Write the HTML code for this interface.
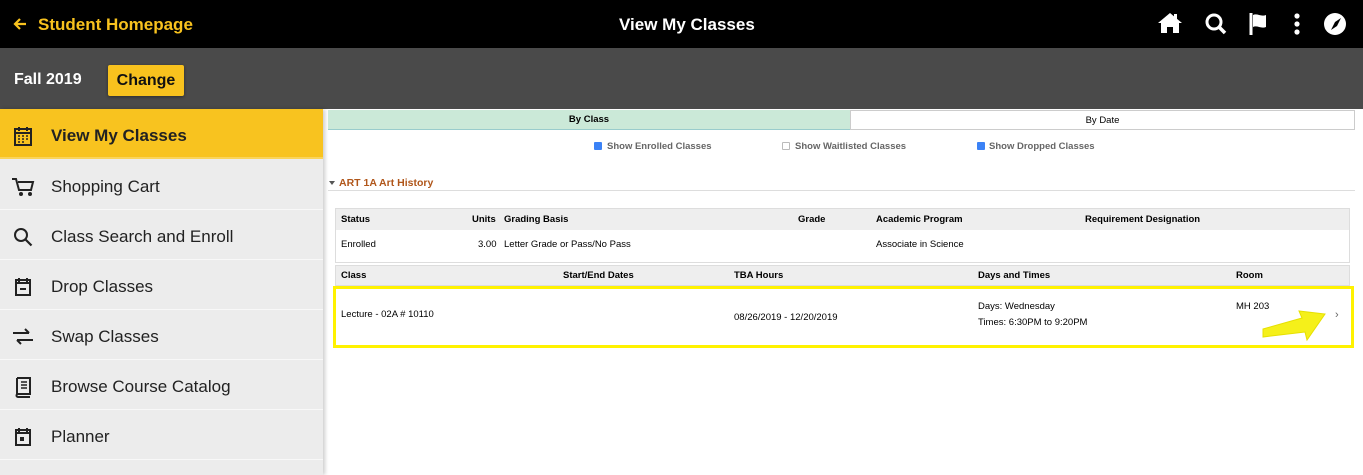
<!DOCTYPE html><html><head><style>
*{margin:0;padding:0;box-sizing:border-box}
body{width:1363px;height:475px;overflow:hidden;background:#fff;font-family:"Liberation Sans",sans-serif;position:relative}
.a{position:absolute}
.top{left:0;top:0;width:1363px;height:48px;background:#000}
.bar{left:0;top:48px;width:1363px;height:61px;background:#4a4a4a}
.side{left:0;top:109px;width:323px;height:366px;background:#ececec;box-shadow:2px 0 4px rgba(0,0,0,.2)}
.it{position:absolute;left:0;width:323px;height:50px;border-bottom:1px solid #f8f8f8;font-size:17px;color:#222}
.it span{position:absolute;left:51px;top:17px}
.it svg{position:absolute;left:12px;top:16px}
.t{font-size:9.5px;color:#000}
.b{font-weight:bold}
</style></head><body>
<div class="a top"></div>
<svg class="a" style="left:12px;top:16px" width="16" height="16" viewBox="0 0 16 16"><path d="M14 8H3M8 3L3 8l5 5" stroke="#f8c21e" stroke-width="2.2" fill="none"/></svg>
<div class="a b" style="left:38px;top:15px;color:#f8c21e;font-size:17px">Student Homepage</div>
<div class="a b" style="left:619px;top:15px;color:#fff;font-size:17px">View My Classes</div>
<svg class="a" style="left:1157px;top:11px" width="200" height="26" viewBox="0 0 200 26">
<path d="M1 12L13 2l12 10h-3v10h-6v-6h-6v6H4V12z" fill="#fff"/><rect x="17" y="3" width="3" height="6" fill="#fff"/>
<circle cx="57" cy="11" r="7" stroke="#fff" stroke-width="3" fill="none"/><path d="M62 16l6 6" stroke="#fff" stroke-width="3.5"/>
<path d="M94 2v22" stroke="#fff" stroke-width="3"/><path d="M96 4c4-2 8 2 13 0v12c-5 2-9-2-13 0z" fill="#fff"/>
<circle cx="140" cy="5" r="2.6" fill="#fff"/><circle cx="140" cy="13" r="2.6" fill="#fff"/><circle cx="140" cy="21" r="2.6" fill="#fff"/>
<circle cx="178" cy="13" r="11" fill="#fff"/><path d="M184 7l-4 8-6 4 4-8z" fill="#000"/>
</svg>
<div class="a bar"></div>
<div class="a b" style="left:14px;top:71px;color:#fff;font-size:16px">Fall 2019</div>
<div class="a b" style="left:108px;top:65px;width:76px;height:31px;background:#f8c21e;border-radius:2px;font-size:16px;color:#111;text-align:center;line-height:31px;box-shadow:0 1px 3px rgba(0,0,0,.4)">Change</div>
<div class="a side">
<div class="it" style="top:0;background:#f8c31f;border-bottom:2px solid #fad45a"><svg width="22" height="22" viewBox="0 0 22 22"><rect x="3" y="4" width="16" height="16" fill="none" stroke="#222" stroke-width="2"/><path d="M3 8h16M7 2v4M15 2v4" stroke="#222" stroke-width="2"/><path d="M6 11h2M10 11h2M14 11h2M6 14h2M10 14h2M14 14h2M6 17h2M10 17h2" stroke="#222" stroke-width="1.6"/></svg><span class="b">View My Classes</span></div>
<div class="it" style="top:51px"><svg width="24" height="22" viewBox="0 0 24 22"><path d="M0 3h4l3 11h12l2-8H6" stroke="#222" stroke-width="2" fill="none"/><circle cx="9" cy="18" r="2" fill="#222"/><circle cx="18" cy="18" r="2" fill="#222"/></svg><span>Shopping Cart</span></div>
<div class="it" style="top:101px"><svg width="22" height="22" viewBox="0 0 22 22"><circle cx="9" cy="9" r="6" stroke="#222" stroke-width="2" fill="none"/><path d="M13.5 13.5l6 6" stroke="#222" stroke-width="2.2"/></svg><span>Class Search and Enroll</span></div>
<div class="it" style="top:151px"><svg width="22" height="22" viewBox="0 0 22 22"><rect x="4" y="4" width="14" height="15" fill="none" stroke="#222" stroke-width="2"/><path d="M4 7h14M7 2v4M15 2v4M8 13h6" stroke="#222" stroke-width="2"/></svg><span>Drop Classes</span></div>
<div class="it" style="top:201px"><svg width="22" height="22" viewBox="0 0 22 22"><path d="M1 7h16M13 3l4 4M21 14H5M9 18l-4-4" stroke="#222" stroke-width="2" fill="none"/></svg><span>Swap Classes</span></div>
<div class="it" style="top:251px"><svg width="22" height="22" viewBox="0 0 22 22"><path d="M5 2h13v16H6a1.5 1.5 0 000 3h12M5 2v17" stroke="#222" stroke-width="2" fill="none"/><path d="M9 6h6M9 9h6M9 12h6" stroke="#222" stroke-width="1.5"/></svg><span>Browse Course Catalog</span></div>
<div class="it" style="top:301px"><svg width="22" height="22" viewBox="0 0 22 22"><rect x="4" y="4" width="14" height="15" fill="none" stroke="#222" stroke-width="2"/><path d="M4 7h14M7 2v4M15 2v4" stroke="#222" stroke-width="2"/><rect x="8" y="11" width="4" height="4" fill="#222"/></svg><span>Planner</span></div>
</div>
<div class="a t b" style="left:328px;top:110px;width:522px;height:20px;background:#cbe9d8;border-bottom:1px solid #9cc;text-align:center;line-height:20px">By Class</div>
<div class="a t" style="left:850px;top:110px;width:505px;height:20px;border:1px solid #ccc;text-align:center;line-height:19px">By Date</div>
<div class="a" style="left:594px;top:142px;width:8px;height:8px;background:#3b82f6;border-radius:1px"></div>
<div class="a t b" style="left:607px;top:141px;color:#666">Show Enrolled Classes</div>
<div class="a" style="left:782px;top:142px;width:8px;height:8px;border:1px solid #bbb;border-radius:1px"></div>
<div class="a t b" style="left:795px;top:141px;color:#666">Show Waitlisted Classes</div>
<div class="a" style="left:977px;top:142px;width:8px;height:8px;background:#3b82f6;border-radius:1px"></div>
<div class="a t b" style="left:989px;top:141px;color:#666">Show Dropped Classes</div>
<div class="a" style="left:329px;top:181px;width:0;height:0;border:3.5px solid transparent;border-top:4px solid #555"></div>
<div class="a b" style="left:339px;top:177px;color:#b0561a;font-size:10.5px">ART 1A Art History</div>
<div class="a" style="left:328px;top:190px;width:1027px;height:1px;background:#ddd"></div>
<div class="a" style="left:335px;top:208px;width:1015px;height:55px;border:1px solid #ddd"></div>
<div class="a" style="left:336px;top:209px;width:1013px;height:21px;background:#eee"></div>
<div class="a t b" style="left:341px;top:214px">Status</div><div class="a t b" style="left:472px;top:214px">Units</div><div class="a t b" style="left:504px;top:214px">Grading Basis</div><div class="a t b" style="left:798px;top:214px">Grade</div><div class="a t b" style="left:876px;top:214px">Academic Program</div><div class="a t b" style="left:1085px;top:214px">Requirement Designation</div>
<div class="a t" style="left:341px;top:239px">Enrolled</div><div class="a t" style="left:478px;top:239px">3.00</div><div class="a t" style="left:504px;top:239px">Letter Grade or Pass/No Pass</div><div class="a t" style="left:876px;top:239px">Associate in Science</div>
<div class="a" style="left:335px;top:265px;width:1015px;height:21px;background:#eee;border:1px solid #ddd"></div>
<div class="a t b" style="left:341px;top:270px">Class</div><div class="a t b" style="left:563px;top:270px">Start/End Dates</div><div class="a t b" style="left:734px;top:270px">TBA Hours</div><div class="a t b" style="left:978px;top:270px">Days and Times</div><div class="a t b" style="left:1236px;top:270px">Room</div>
<div class="a" style="left:333px;top:286px;width:1021px;height:62px;border:3px solid #fff200"></div>
<div class="a t" style="left:341px;top:309px">Lecture - 02A # 10110</div>
<div class="a t" style="left:734px;top:312px">08/26/2019 - 12/20/2019</div>
<div class="a t" style="left:978px;top:301px">Days: Wednesday</div>
<div class="a t" style="left:978px;top:317px">Times: 6:30PM to 9:20PM</div>
<div class="a t" style="left:1236px;top:301px">MH 203</div>
<div class="a" style="left:1335px;top:309px;color:#666;font-size:11px">›</div>
<svg class="a" style="left:1260px;top:302px" width="70" height="40" viewBox="0 0 70 40"><path d="M3 27L42 16l-3-7 26 3-18 26-2-8-42 5z" fill="#f5f01a" stroke="#e6e000" stroke-width="1"/></svg>
</body></html>
